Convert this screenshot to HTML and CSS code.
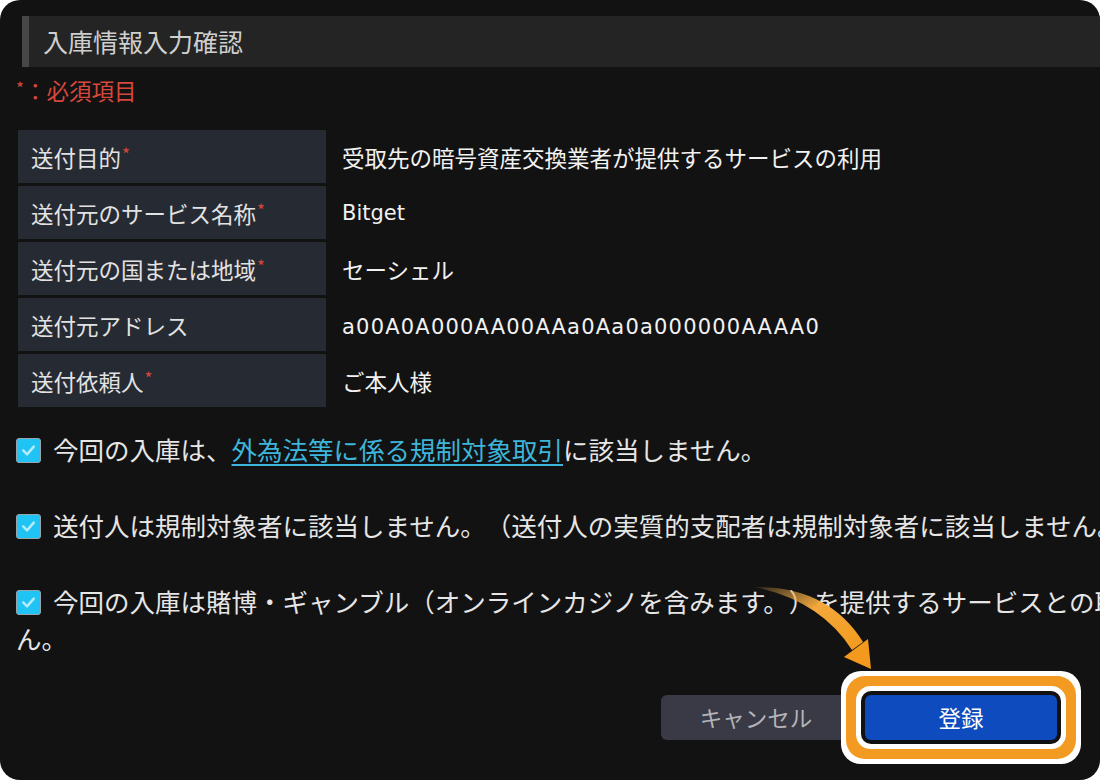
FILE: index.html
```html
<!DOCTYPE html>
<html lang="ja">
<head>
<meta charset="utf-8">
<title>入庫情報入力確認</title>
<link rel="stylesheet" href="styles.css">
</head>
<body>
<div class="panel">
  <div class="header">入庫情報入力確認</div>
  <div class="required"><span class="ast">*</span>：必須項目</div>

  <div class="table">
    <div class="label">送付目的<span class="ast">*</span></div>
    <div class="value">受取先の暗号資産交換業者が提供するサービスの利用</div>
    <div class="label">送付元のサービス名称<span class="ast">*</span></div>
    <div class="value latin">Bitget</div>
    <div class="label">送付元の国または地域<span class="ast">*</span></div>
    <div class="value">セーシェル</div>
    <div class="label">送付元アドレス</div>
    <div class="value latin addr">a00A0A000AA00AAa0Aa0a000000AAAA0</div>
    <div class="label">送付依頼人<span class="ast">*</span></div>
    <div class="value">ご本人様</div>
  </div>

  <div class="checks">
    <p class="check"><span class="box"><svg viewBox="0 0 24 24" width="24" height="24"><path d="M6.5 12.5l4 4 7-8" fill="none" stroke="#b3ecfc" stroke-width="2.6" stroke-linecap="round" stroke-linejoin="round"/></svg></span>今回の入庫は、<a class="link" href="#">外為法等に係る規制対象取引</a>に該当しません。</p>
    <p class="check"><span class="box"><svg viewBox="0 0 24 24" width="24" height="24"><path d="M6.5 12.5l4 4 7-8" fill="none" stroke="#b3ecfc" stroke-width="2.6" stroke-linecap="round" stroke-linejoin="round"/></svg></span>送付人は規制対象者に該当しません。（送付人の実質的支配者は規制対象者に該当しません。）</p>
    <p class="check"><span class="box"><svg viewBox="0 0 24 24" width="24" height="24"><path d="M6.5 12.5l4 4 7-8" fill="none" stroke="#b3ecfc" stroke-width="2.6" stroke-linecap="round" stroke-linejoin="round"/></svg></span>今回の入庫は賭博・ギャンブル（オンラインカジノを含みます。）を提供するサービスとの取引に該当しません。</p>
  </div>

  <div class="actions">
    <button class="btn cancel">キャンセル</button>
    <button class="btn submit">登録</button>
  </div>

  <svg class="arrow" viewBox="0 0 150 100" width="150" height="100">
    <defs>
      <linearGradient id="ag" x1="0" y1="0" x2="1" y2="1">
        <stop offset="0" stop-color="#f6b556" stop-opacity="0.1"/>
        <stop offset="0.45" stop-color="#f4a83a"/>
        <stop offset="1" stop-color="#f39a1e"/>
      </linearGradient>
    </defs>
    <path d="M14 7 Q88 6 123 62 L112 70 Q80 20 14 7 Z" fill="url(#ag)"/>
    <polygon points="104,77 128,59 131,89" fill="#f39a1e"/>
  </svg>
</div>
</body>
</html>
```

FILE: styles.css
```css
html, body {
  margin: 0;
  padding: 0;
  background: #ffffff;
}

body {
  font-family: "Noto Sans CJK JP", "Noto Sans", sans-serif;
  text-spacing-trim: space-all;
}

.panel {
  position: relative;
  width: 1100px;
  height: 780px;
  background: #121212;
  border-radius: 20px;
  overflow: hidden;
  padding-top: 16px;
  box-sizing: border-box;
}

.header {
  margin-left: 22px;
  width: 1200px;
  height: 51px;
  border-left: 7px solid #474747;
  background: #242424;
  padding-left: 14px;
  box-sizing: border-box;
  color: #cfcfcf;
  font-size: 25px;
  line-height: 51px;
}

.required {
  margin: 10px 0 0 16px;
  height: 26px;
  color: #d6473c;
  font-size: 22.5px;
  line-height: 26px;
}

.ast {
  color: #d6473c;
  font-size: 17px;
  vertical-align: top;
  line-height: 1;
  position: relative;
  top: 2px;
}

.table {
  margin: 27px 0 0 18px;
  display: grid;
  grid-template-columns: 308px 1fr;
  grid-auto-rows: 53px;
  row-gap: 3px;
  column-gap: 16px;
}

.label {
  background: #262a32;
  color: #e2e2e2;
  font-size: 22.5px;
  padding-left: 13px;
  display: flex;
  align-items: center;
  white-space: nowrap;
}

.label .ast {
  align-self: flex-start;
  top: 15px;
  margin-left: 1px;
}

.value {
  color: #f1f1f1;
  font-size: 22.5px;
  display: flex;
  align-items: center;
  white-space: nowrap;
}

.latin {
  font-family: "DejaVu Sans", sans-serif;
  font-size: 21px;
}

.addr {
  letter-spacing: 1.2px;
  padding-top: 4px;
}

.checks {
  margin: 23px 0 0 16px;
  width: 1290px;
}

.check {
  margin: 0 0 39px 0;
  color: #e6e6e6;
  font-size: 25.5px;
  line-height: 37px;
}

.box {
  display: inline-flex;
  align-items: center;
  justify-content: center;
  width: 25px;
  height: 25px;
  box-sizing: border-box;
  background: #1fc4f4;
  border: 1px solid #9aa4aa;
  border-radius: 3px;
  vertical-align: middle;
  margin-right: 12px;
  position: relative;
  top: -3px;
}

.box svg {
  display: block;
}

.link {
  color: #3eb5da;
  text-decoration: underline;
  text-underline-offset: 4px;
  text-decoration-thickness: 2px;
}

.actions {
  display: flex;
  justify-content: flex-end;
  gap: 14px;
  width: 1100px;
  box-sizing: border-box;
  padding-right: 43px;
  margin-top: 0;
}

.btn {
  height: 45px;
  border: none;
  border-radius: 6px;
  font-family: "Noto Sans CJK JP", sans-serif;
  font-size: 22.5px;
  line-height: 45px;
  padding: 0;
}

.cancel {
  width: 190px;
  background: #393a45;
  color: #b4b4b8;
}

.submit {
  width: 192px;
  background: #0d4bbe;
  color: #ffffff;
  box-shadow:
    0 0 0 4px #111111,
    0 0 0 9px #ffffff,
    0 0 0 19px #f39a22,
    0 0 0 24px #ffffff;
}

.arrow {
  position: absolute;
  left: 740px;
  top: 580px;
}
```
